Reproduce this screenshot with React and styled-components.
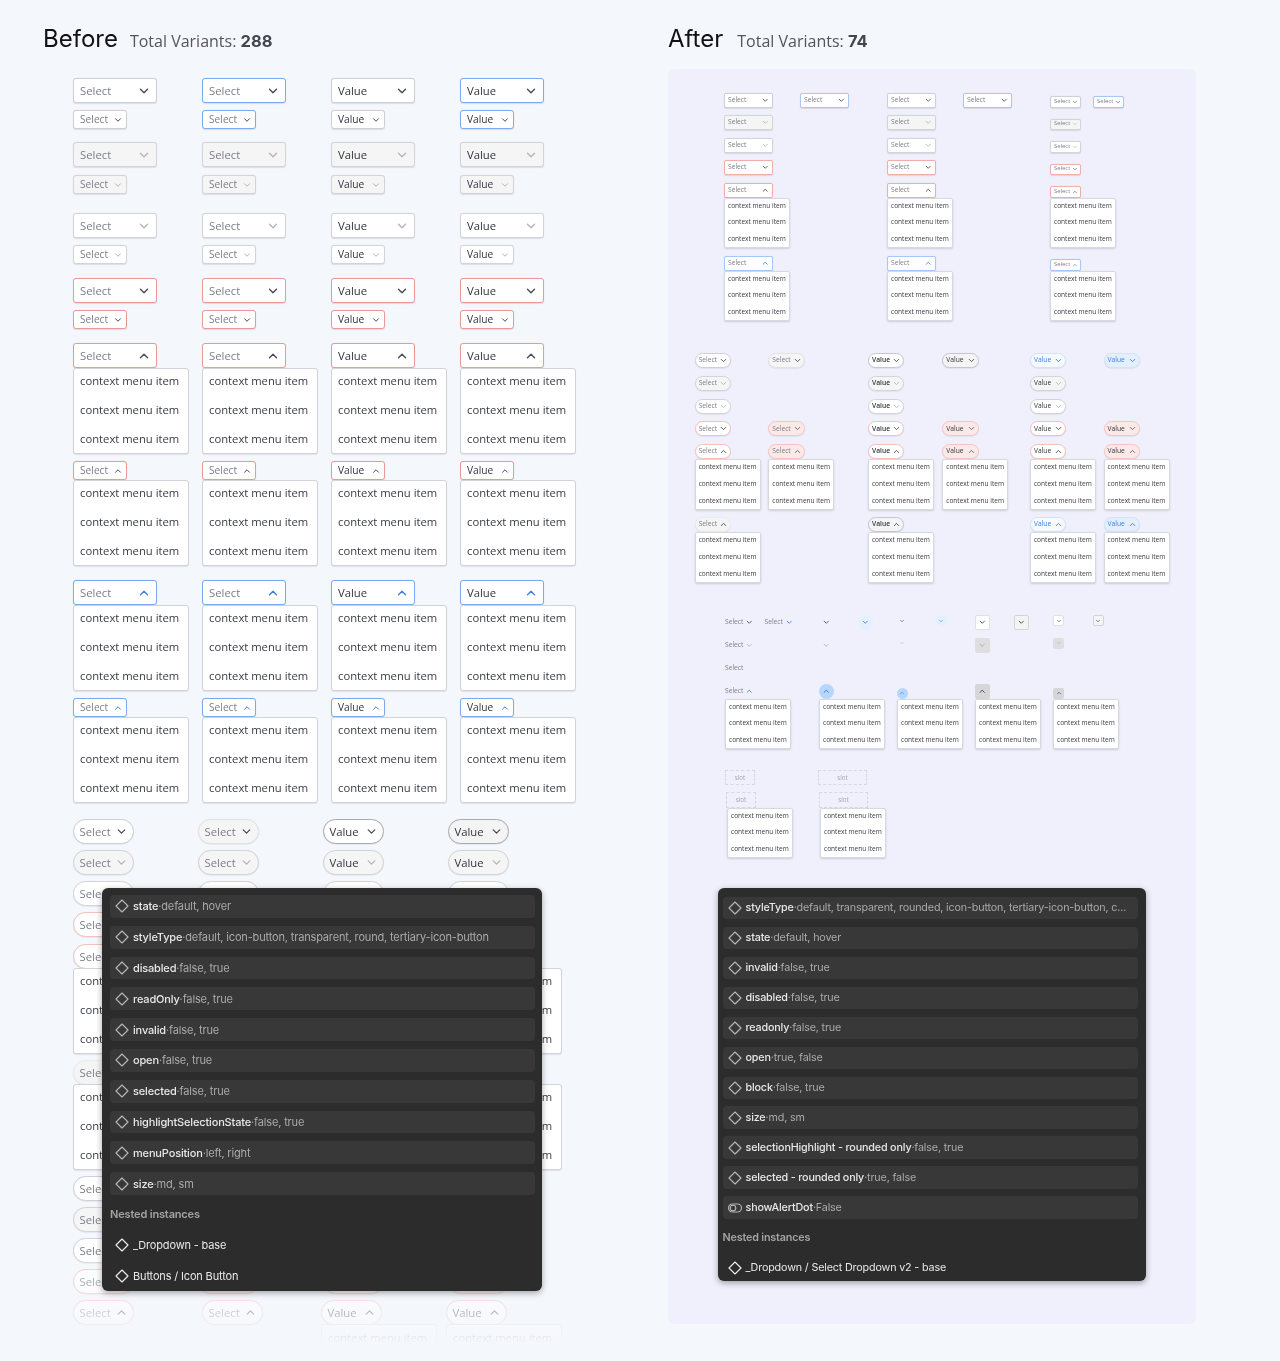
import React from "react";
import styled, { createGlobalStyle, css } from "styled-components";
import { ChevronDown, ChevronUp } from "lucide-react";

const GlobalStyle = createGlobalStyle`
  html, body { margin: 0; padding: 0; background: #f4f7fc; }
  * { box-sizing: border-box; }
`;

const tones = {
  default: { border: "#cfd0d6", bg: "#fff", chev: "#4a4c55" },
  blue: { border: "#7aabf0", bg: "#fff", chev: "#4a4c55" },
  blueOpen: { border: "#7aabf0", bg: "#fff", chev: "#3f7fdc" },
  miniBlue: { border: "#a6c8f6", bg: "#fff", chev: "#4a4c55" },
  miniBlueOpen: { border: "#a6c8f6", bg: "#fff", chev: "#3f7fdc" },
  disabled: { border: "#d4d4d8", bg: "#f5f5f6", chev: "#b4b5bb" },
  readonly: { border: "#d4d4d8", bg: "#fff", chev: "#b4b5bb" },
  invalid: { border: "#ea9a96", bg: "#fff", chev: "#4a4c55" },
  miniInvalid: { border: "#f0aeab", bg: "#fff", chev: "#4a4c55" },
  softRed: { border: "#f6c0bc", bg: "#fff", chev: "#4a4c55" },
  pink: { border: "#f6c6c4", bg: "#fbe9e8", chev: "#62636b" },
  hover: { border: "#e2e2e5", bg: "#f5f5f6", chev: "#4a4c55" },
  strong: { border: "#a9aab2", bg: "#fff", chev: "#4a4c55" },
  strongGray: { border: "#a9aab2", bg: "#f4f4f5", chev: "#4a4c55" },
  softStrong: { border: "#c5c6d2", bg: "#fff", chev: "#4a4c55" },
  softStrongGray: { border: "#c5c6d2", bg: "#f4f4f5", chev: "#4a4c55" },
  flatGray: { border: "#ececee", bg: "#f4f4f5", chev: "#4a4c55" },
  info: { border: "#d2e4fb", bg: "#f6f9fe", chev: "#3f7fdc", text: "#3f80e0" },
  infoFill: { border: "#d2e4fb", bg: "#e3effd", chev: "#3f7fdc", text: "#3f80e0" },
  bare: { border: "transparent", bg: "transparent", chev: "#4a4c55" },
  bareBlue: { border: "transparent", bg: "transparent", chev: "#3f7fdc" },
  bareOff: { border: "transparent", bg: "transparent", chev: "#b4b5bb" },
};

const sizes = {
  md: { w: 84, h: 25, fs: 11.3, r: 3, pl: 6, pr: 5, chev: 14 },
  sm: { w: 54, h: 19, fs: 10.2, r: 3, pl: 6, pr: 3.5, chev: 10 },
  pill: { w: 61, h: 25, r: 13, fs: 11.3, pl: 5.5, pr: 5, chev: 13 },
  miniMd: { w: 49, h: 15, fs: 6.7, r: 2, pl: 3, pr: 2.3, chev: 8.5 },
  miniSm: { w: 31, h: 11.5, fs: 5.9, r: 2, pl: 3, pr: 2, chev: 6 },
  miniPill: { w: 36.5, h: 15, fs: 6.7, r: 8, pl: 3, pr: 2, chev: 9 },
  miniBare: { w: 30.5, h: 15, fs: 6.7, r: 0, pl: 0, pr: 0, chev: 8.5 },
};

const Page = styled.div`
  position: relative;
  display: flex;
  width: 1280px;
  height: 1361px;
  overflow: hidden;
  background: #f4f7fc;
  font-family: "Open Sans", "Noto Sans", sans-serif;
  filter: blur(0.25px);
`;

const Side = styled.section`
  position: relative;
  flex: none;
  width: ${(p) => p.$width}px;
`;

const Head = styled.header`
  display: flex;
  align-items: baseline;
  gap: ${(p) => p.$gap}px;
  height: 69px;
  padding: 23px 0 0 ${(p) => p.$left}px;
`;

const Title = styled.h1`
  margin: 0;
  font: 400 24px/32px Inter, sans-serif;
  color: #111216;
`;

const Count = styled.span`
  font-size: 16px;
  color: #53555d;
  b { font: 700 16.5px Inter, sans-serif; color: #44464e; }
`;

const Board = styled.div`
  padding: 9px 0 0 73px;
`;

const Row = styled.div`
  display: grid;
  grid-template-columns: ${(p) => p.$cols};
  align-items: ${(p) => p.$align || "start"};
  margin-top: ${(p) => p.$mt || 0}px;
  padding-left: ${(p) => p.$left || 0}px;
`;

const Cell = styled.div`
  display: flex;
  flex-direction: column;
  align-items: flex-start;
  min-width: 0;
  min-height: 0;
  padding-left: ${(p) => p.$nudge || 0}px;
`;

const Select = styled.div`
  flex: none;
  display: flex;
  align-items: center;
  justify-content: space-between;
  ${({ $size, $tone }) => {
    const s = sizes[$size];
    const t = tones[$tone];
    return css`
      width: ${s.w}px;
      height: ${s.h}px;
      padding: 0 ${s.pr}px 0 ${s.pl}px;
      border-radius: ${s.r}px;
      font-size: ${s.fs}px;
      background: ${t.bg};
      border: ${$size.startsWith("mini") ? 0.75 : 1}px solid ${t.border};
      color: ${t.chev};
      box-shadow: ${$tone.startsWith("bare") ? "none" : "0 0.5px 1px rgba(40, 44, 60, 0.12)"};
    `;
  }}
`;

const SelectText = styled.span`
  white-space: nowrap;
  line-height: 1;
  color: ${(p) => p.$color || (p.$value ? "#33353d" : "#7c7e88")};
  font-weight: ${(p) => (p.$bold ? 600 : 400)};
`;

const Menu = styled.div`
  flex: none;
  display: flex;
  flex-direction: column;
  justify-content: center;
  background: #fff;
  color: #3a3c45;
  white-space: nowrap;
  ${(p) =>
    p.$mini
      ? css`
          width: 66px;
          height: 50.5px;
          padding: 0 3px;
          border: 0.5px solid #d8d9de;
          border-radius: 2px;
          font-size: 6.55px;
          box-shadow: 0 1px 2px rgba(40, 44, 60, 0.18);
        `
      : css`
          width: 116px;
          height: ${p.$short ? 30 : 86}px;
          padding: 0 6px 3px;
          border: 1px solid #d2d3d9;
          border-radius: 3px;
          font-size: 11.25px;
          margin-top: ${p.$tuck ? -1 : 0}px;
          box-shadow: 0 1px 1px rgba(40, 44, 60, 0.1);
        `}
`;

const MenuItem = styled.div`
  height: ${(p) => (p.$mini ? 16.8 : 29)}px;
  line-height: ${(p) => (p.$mini ? 16.8 : 29)}px;
`;

const IconBtn = styled.div`
  flex: none;
  display: flex;
  align-items: center;
  justify-content: center;
  width: ${(p) => p.$box}px;
  height: ${(p) => p.$box}px;
  border-radius: ${(p) => (p.$round ? "50%" : "2px")};
  background: ${(p) => p.$bg || "transparent"};
  border: ${(p) => (p.$line ? `0.75px solid ${p.$line}` : "0")};
  color: ${(p) => p.$ink || "#4a4c55"};
`;

const Slot = styled.div`
  display: flex;
  align-items: center;
  justify-content: center;
  width: ${(p) => p.$w}px;
  height: 15.5px;
  border: 0.75px dashed #d6d7df;
  border-radius: 1px;
  font-size: 6.3px;
  color: #a6a7b0;
`;

const Canvas = styled.div`
  width: 528px;
  height: 1255px;
  border-radius: 6px;
  background: #f0f0fc;
`;

const CanvasInner = styled.div`
  padding-top: 23.5px;
  filter: blur(0.25px);
`;

const Group = styled.div`
  margin-top: ${(p) => p.$mt}px;
  padding-left: ${(p) => p.$left}px;
`;

const Fade = styled.div`
  position: absolute;
  left: 0;
  top: 1262px;
  width: 100%;
  height: 99px;
  background: linear-gradient(to bottom, rgba(244, 247, 252, 0.2) 0%, rgba(244, 247, 252, 0.65) 50%, #f4f7fc 84%);
  z-index: 1;
`;

const Props = styled.aside`
  position: absolute;
  z-index: 2;
  left: ${(p) => p.$x}px;
  top: 888px;
  width: ${(p) => p.$w}px;
  height: ${(p) => p.$h}px;
  padding: ${(p) => p.$pad};
  display: flex;
  flex-direction: column;
  gap: ${(p) => p.$gap}px;
  border-radius: 6px;
  background: #2c2c2c;
  box-shadow: 0 2px 6px rgba(0, 0, 0, 0.35);
  font: 400 ${(p) => p.$fs}px/16px Inter, sans-serif;
  letter-spacing: -0.16px;
`;

const Prop = styled.div`
  flex: none;
  display: flex;
  align-items: center;
  gap: 4px;
  height: ${(p) => p.$h}px;
  padding-left: 5px;
  border-radius: 4px;
  background: ${(p) => (p.$flat ? "transparent" : "#383838")};
  white-space: nowrap;
`;

const PropName = styled.span`
  color: #e8e8e8;
  font-weight: ${(p) => (p.$thin ? 400 : 500)};
`;

const PropValue = styled.span`
  color: #a9a9a9;
`;

const NestedTitle = styled.div`
  flex: none;
  display: flex;
  align-items: center;
  height: ${(p) => p.$h}px;
  font-weight: 600;
  color: #a3a3a3;
`;

const PropIcon = styled.svg`
  flex: none;
  width: 14px;
  height: 14px;
  fill: none;
  stroke: ${(p) => (p.$bright ? "#ececec" : "#b5b5b5")};
  stroke-width: 1.15;
`;

const Diamond = ({ bright }) => (
  <PropIcon $bright={bright} viewBox="0 0 14 14">
    <path d="M7 1 L13 7 L7 13 L1 7 Z" strokeLinejoin="round" />
  </PropIcon>
);

const ToggleIcon = () => (
  <PropIcon viewBox="0 0 14 14">
    <rect x="0.5" y="3" width="13" height="8" rx="4" />
    <circle cx="5" cy="7" r="2.8" />
  </PropIcon>
);

const Chevron = ({ open, size, ink }) => {
  const Icon = open ? ChevronUp : ChevronDown;
  return <Icon size={size} strokeWidth={2.4} color={ink || "currentColor"} />;
};

const MenuBox = ({ mini, tuck, short }) => (
  <Menu $mini={mini} $tuck={tuck} $short={short}>
    {Array.from({ length: short ? 1 : 3 }, (_, i) => (
      <MenuItem key={i} $mini={mini}>context menu item</MenuItem>
    ))}
  </Menu>
);

// one field: the select, and its menu when it is open with a list
const Field = ({ size, tone, label = "Select", open, menu, bold, tuck, short, noIcon }) => (
  <>
    <Select $size={size} $tone={tone}>
      <SelectText $value={label === "Value"} $bold={bold} $color={tones[tone].text}>{label}</SelectText>
      {!noIcon && <Chevron open={open} size={sizes[size].chev} />}
    </Select>
    {menu && <MenuBox mini={size.startsWith("mini")} tuck={tuck} short={short} />}
  </>
);

// BEFORE: rectangular selects
const squareRows = [
  { size: "md", tone: "default", alt: "blue" },
  { size: "sm", tone: "default", alt: "blue", mt: 7 },
  { size: "md", tone: "disabled", mt: 13 },
  { size: "sm", tone: "disabled", mt: 8 },
  { size: "md", tone: "readonly", mt: 19 },
  { size: "sm", tone: "readonly", mt: 7 },
  { size: "md", tone: "invalid", mt: 14 },
  { size: "sm", tone: "invalid", mt: 7 },
  { size: "md", tone: "invalid", mt: 14, open: true },
  { size: "sm", tone: "invalid", mt: 7, open: true },
  { size: "md", tone: "blueOpen", mt: 14, open: true },
  { size: "sm", tone: "blueOpen", mt: 7, open: true },
];

const squareColumns = [
  { label: "Select" },
  { label: "Select", useAlt: true },
  { label: "Value" },
  { label: "Value", useAlt: true },
];

// BEFORE: rounded selects, tone of each of the four columns
const pillRows = [
  { mt: 16, tones: ["default", "hover", "strong", "strongGray"] },
  { mt: 6, tones: ["disabled", "disabled", "disabled", "disabled"] },
  { mt: 6, tones: ["readonly", "readonly", "readonly", "readonly"] },
  { mt: 6, tones: ["softRed", "pink", "softRed", "pink"] },
  { mt: 7, tones: ["softRed", "pink", "softRed", "pink"], open: true, menu: [0, 1, 2, 3], shift: true },
  { mt: 6, tones: ["flatGray", "flatGray", "strongGray", "strongGray"], open: true, menu: [0, 1, 2, 3], shift: true },
  { mt: 6, tones: ["default", "hover", "strong", "strongGray"] },
  { mt: 6, tones: ["disabled", "disabled", "disabled", "disabled"] },
  { mt: 6, tones: ["readonly", "readonly", "readonly", "readonly"] },
  { mt: 6, tones: ["softRed", "pink", "softRed", "pink"] },
  { mt: 6, tones: ["softRed", "softRed", "softRed", "softRed"], open: true, menu: [2, 3], shift: true, short: true },
];

const pillLabels = ["Select", "Select", "Value", "Value"];

// AFTER: first block
const miniTopCols = "76px 87px 76px 87px 43px 32px";
const miniTopRows = [
  { cells: ["default", "miniBlue", "default", "miniBlue", "default", "miniBlue"] },
  { mt: 7.5, cells: ["disabled", null, "disabled", null, "disabled", null] },
  { mt: 7.5, cells: ["readonly", null, "readonly", null, "readonly", null] },
  { mt: 7.5, cells: ["miniInvalid", null, "miniInvalid", null, "miniInvalid", null] },
  { mt: 7.5, open: true, cells: ["miniInvalid", null, "miniInvalid", null, "miniInvalid", null] },
  { mt: 7.5, open: true, cells: ["miniBlueOpen", null, "miniBlueOpen", null, "miniBlueOpen", null] },
];

// AFTER: pill block, a cell is [tone, label, bold]
const miniPillCols = "73.6px 99.7px 74.3px 87.7px 73.6px 60px";
const S = "Select";
const V = "Value";
const miniPillRows = [
  { cells: [["default", S], ["hover", S], ["softStrong", V, true], ["softStrongGray", V], ["info", V], ["infoFill", V]] },
  { mt: 7.8, cells: [["disabled", S], null, ["disabled", V, true], null, ["disabled", V], null] },
  { mt: 7.8, cells: [["readonly", S], null, ["readonly", V, true], null, ["readonly", V], null] },
  { mt: 7.8, cells: [["softRed", S], ["pink", S], ["softRed", V, true], ["pink", V], ["softRed", V], ["pink", V]] },
  { mt: 7.8, open: true, cells: [["softRed", S], ["pink", S], ["softRed", V, true], ["pink", V], ["softRed", V], ["pink", V]] },
  { mt: 7.5, open: true, cells: [["flatGray", S], null, ["softStrongGray", V, true], null, ["info", V], ["infoFill", V]] },
];

const iconCols = "39.5px 55px 39px 39px 39px 39px 39px 39.5px 39.5px 20px";
const blueSoft = { $round: true, $bg: "#e4f0fe", $ink: "#3f7fdc" };
const blueFull = { $round: true, $bg: "#b6d6fc", $ink: "#2f6fd0" };
const boxWhite = { $bg: "#fff", $line: "#e0e0e3", $ink: "#33353d" };
const boxHover = { $bg: "#f4f4f5", $line: "#d4d4d8", $ink: "#33353d" };
const boxOff = { $bg: "#dedee1", $ink: "#a9a9b0" };
const boxOn = { $bg: "#d6d6d9", $ink: "#33353d" };

const beforeProps = [
  ["state", "default, hover"],
  ["styleType", "default, icon-button, transparent, round, tertiary-icon-button"],
  ["disabled", "false, true"],
  ["readOnly", "false, true"],
  ["invalid", "false, true"],
  ["open", "false, true"],
  ["selected", "false, true"],
  ["highlightSelectionState", "false, true"],
  ["menuPosition", "left, right"],
  ["size", "md, sm"],
];

const afterProps = [
  ["styleType", "default, transparent, rounded, icon-button, tertiary-icon-button, c..."],
  ["state", "default, hover"],
  ["invalid", "false, true"],
  ["disabled", "false, true"],
  ["readonly", "false, true"],
  ["open", "true, false"],
  ["block", "false, true"],
  ["size", "md, sm"],
  ["selectionHighlight - rounded only", "false, true"],
  ["selected - rounded only", "true, false"],
];

const PropRow = ({ name, value, h, toggle }) => (
  <Prop $h={h}>
    {toggle ? <ToggleIcon /> : <Diamond />}
    <span>
      <PropName>{name}</PropName>
      <PropValue>·{value}</PropValue>
    </span>
  </Prop>
);

const NestedRow = ({ name, h }) => (
  <Prop $h={h} $flat>
    <Diamond bright />
    <PropName $thin>{name}</PropName>
  </Prop>
);

export default function App() {
  return (
    <Page>
      <GlobalStyle />

      <Side $width={668}>
        <Head $left={43} $gap={12}>
          <Title>Before</Title>
          <Count>Total Variants: <b>288</b></Count>
        </Head>

        <Board>
          {squareRows.map((row, r) => (
            <Row key={r} $cols="129px 129px 129px 129px" $mt={row.mt}>
              {squareColumns.map((col, c) => (
                <Cell key={c}>
                  <Field
                    size={row.size}
                    tone={col.useAlt && row.alt ? row.alt : row.tone}
                    label={col.label}
                    open={row.open}
                    menu={row.open}
                  />
                </Cell>
              ))}
            </Row>
          ))}

          {pillRows.map((row, r) => (
            <Row key={r} $cols={row.shift ? "129px 119px 125px 125px" : "125px 125px 125px 125px"} $mt={row.mt}>
              {row.tones.map((tone, c) => (
                <Cell key={c}>
                  <Field
                    size="pill"
                    tone={tone}
                    label={pillLabels[c]}
                    open={row.open}
                    menu={row.menu && row.menu.includes(c)}
                    short={row.short}
                    tuck
                  />
                </Cell>
              ))}
            </Row>
          ))}
        </Board>

        <Fade />

        <Props $x={102} $w={440} $h={403} $pad="7px 7px 0 8px" $gap={8} $fs={11}>
          {beforeProps.map(([name, value]) => (
            <PropRow key={name} name={name} value={value} h={22.8} />
          ))}
          <NestedTitle $h={22.8}>Nested instances</NestedTitle>
          <NestedRow name="_Dropdown - base" h={22.8} />
          <NestedRow name="Buttons / Icon Button" h={22.8} />
        </Props>
      </Side>

      <Side $width={612}>
        <Head $left={0} $gap={14}>
          <Title>After</Title>
          <Count>Total Variants: <b>74</b></Count>
        </Head>

        <Canvas>
          <CanvasInner>
            <Group $mt={0} $left={56}>
              {miniTopRows.map((row, r) => (
                <Row key={r} $cols={miniTopCols} $mt={row.mt} $align="end">
                  {row.cells.map((tone, c) => (
                    <Cell key={c}>
                      {tone && (
                        <Field
                          size={c > 3 ? "miniSm" : "miniMd"}
                          tone={tone}
                          open={row.open}
                          menu={row.open}
                        />
                      )}
                    </Cell>
                  ))}
                </Row>
              ))}
            </Group>

            <Group $mt={32} $left={26.7}>
              {miniPillRows.map((row, r) => (
                <Row key={r} $cols={miniPillCols} $mt={row.mt}>
                  {row.cells.map((cell, c) => (
                    <Cell key={c}>
                      {cell && (
                        <Field
                          size="miniPill"
                          tone={cell[0]}
                          label={cell[1]}
                          bold={cell[2]}
                          open={row.open}
                          menu={row.open}
                        />
                      )}
                    </Cell>
                  ))}
                </Row>
              ))}
            </Group>

            <Group $mt={32.5} $left={56}>
              <Row $cols={iconCols}>
                <Cell><Field size="miniBare" tone="bare" /></Cell>
                <Cell><Field size="miniBare" tone="bareBlue" /></Cell>
                <Cell><IconBtn $box={15}><Chevron size={8.5} /></IconBtn></Cell>
                <Cell><IconBtn $box={15} {...blueSoft}><Chevron size={8.5} /></IconBtn></Cell>
                <Cell><IconBtn $box={11}><Chevron size={6} /></IconBtn></Cell>
                <Cell><IconBtn $box={11} {...blueSoft}><Chevron size={6} /></IconBtn></Cell>
                <Cell><IconBtn $box={15} {...boxWhite}><Chevron size={8.5} /></IconBtn></Cell>
                <Cell><IconBtn $box={15} {...boxHover}><Chevron size={8.5} /></IconBtn></Cell>
                <Cell><IconBtn $box={11} {...boxWhite}><Chevron size={6} /></IconBtn></Cell>
                <Cell><IconBtn $box={11} {...boxHover}><Chevron size={6} /></IconBtn></Cell>
              </Row>
              <Row $cols={iconCols} $mt={7.8}>
                <Cell><Field size="miniBare" tone="bareOff" /></Cell>
                <Cell />
                <Cell><IconBtn $box={15} $ink="#b4b5bb"><Chevron size={8.5} /></IconBtn></Cell>
                <Cell />
                <Cell><IconBtn $box={11} $ink="#b4b5bb"><Chevron size={6} /></IconBtn></Cell>
                <Cell />
                <Cell><IconBtn $box={15} {...boxOff}><Chevron size={8.5} /></IconBtn></Cell>
                <Cell />
                <Cell><IconBtn $box={11} {...boxOff}><Chevron size={6} /></IconBtn></Cell>
                <Cell />
              </Row>
              <Row $cols={iconCols} $mt={7.8}>
                <Cell><Field size="miniBare" tone="bare" noIcon /></Cell>
              </Row>
              <Row $cols={iconCols} $mt={7.8} $align="end">
                <Cell><Field size="miniBare" tone="bareBlue" open /></Cell>
                <Cell />
                <Cell><IconBtn $box={15} {...blueFull}><Chevron open size={8.5} /></IconBtn></Cell>
                <Cell />
                <Cell><IconBtn $box={11} {...blueFull}><Chevron open size={6} /></IconBtn></Cell>
                <Cell />
                <Cell><IconBtn $box={15} {...boxOn}><Chevron open size={8.5} /></IconBtn></Cell>
                <Cell />
                <Cell><IconBtn $box={11} {...boxOn}><Chevron open size={6} /></IconBtn></Cell>
                <Cell />
              </Row>
              <Row $cols="94px 78px 78px 78px 78px">
                {[0, 1, 2, 3, 4].map((i) => (
                  <Cell key={i} $nudge={1}><MenuBox mini /></Cell>
                ))}
              </Row>
            </Group>

            <Group $mt={20.5} $left={57}>
              <Row $cols="93px 60px">
                <Cell><Slot $w={30}>slot</Slot></Cell>
                <Cell><Slot $w={49}>slot</Slot></Cell>
              </Row>
              <Row $cols="93px 70px" $mt={7} $left={1}>
                <Cell>
                  <Slot $w={30}>slot</Slot>
                  <Cell $nudge={1}><MenuBox mini /></Cell>
                </Cell>
                <Cell>
                  <Slot $w={49}>slot</Slot>
                  <Cell $nudge={1}><MenuBox mini /></Cell>
                </Cell>
              </Row>
            </Group>
          </CanvasInner>
        </Canvas>

        <Props $x={50} $w={428} $h={393} $pad="8.6px 8px 0 4.5px" $gap={7.7} $fs={10.75}>
          {afterProps.map(([name, value]) => (
            <PropRow key={name} name={name} value={value} h={22.3} />
          ))}
          <PropRow name="showAlertDot" value="False" h={22.3} toggle />
          <NestedTitle $h={22.3}>Nested instances</NestedTitle>
          <NestedRow name="_Dropdown / Select Dropdown v2 - base" h={22.3} />
        </Props>
      </Side>
    </Page>
  );
}
